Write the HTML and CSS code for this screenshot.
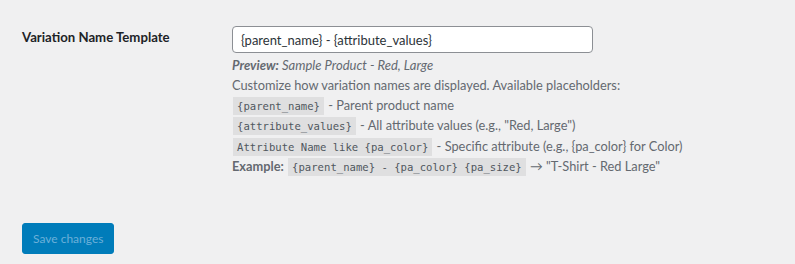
FILE: index.html
```html
<!DOCTYPE html>
<html>
<head>
    <title>Variation Name Settings</title>
    <meta charset="UTF-8">
    <link rel="stylesheet" href="styles.css">
</head>
<body>
    <div class="wrap">
        <form class="settings-form">
            <div class="settings-row">
                <label class="field-label" for="name-template">Variation Name Template</label>
                <div class="field">
                    <input type="text" id="name-template" class="text-input" value="{parent_name} - {attribute_values}">
                    <p class="preview"><strong>Preview:</strong> Sample Product - Red, Large</p>
                    <p class="description">
                        Customize how variation names are displayed. Available placeholders:<br>
                        <code>{parent_name}</code> - Parent product name<br>
                        <code>{attribute_values}</code> - All attribute values (e.g., "Red, Large")<br>
                        <code>Attribute Name like {pa_color}</code> - Specific attribute (e.g., {pa_color} for Color)<br>
                        <strong>Example:</strong> <code>{parent_name} - {pa_color} {pa_size}</code> → "T-Shirt - Red Large"
                    </p>
                </div>
            </div>

            <div class="submit-row">
                <button type="submit" class="save-btn" disabled>Save changes</button>
            </div>
        </form>
    </div>
</body>
</html>
```

FILE: styles.css
```css
body {
    font-family: Lato, "Noto Sans", sans-serif;
    margin: 0;
    background: #f0f0f1;
    color: #1d2327;
    font-size: 13px;
}

.wrap {
    padding: 26px 0 0 22px;
}

.settings-row {
    display: flex;
    align-items: flex-start;
}

.field-label {
    width: 210px;
    flex-shrink: 0;
    font-size: 13.2px;
    font-weight: 700;
    line-height: 20px;
    padding-top: 1px;
    color: #1d2327;
}

.field {
    flex: 1;
}

.text-input {
    display: block;
    box-sizing: border-box;
    width: 361px;
    height: 27px;
    margin: 0;
    padding: 0 8px;
    border: 1px solid #8c8f94;
    border-radius: 4px;
    background: #ffffff;
    color: #2c3338;
    font-family: inherit;
    font-size: 13px;
}

.preview {
    margin: 2px 0 0;
    font-style: italic;
    color: #646970;
    line-height: 20px;
}

.preview strong {
    font-weight: 700;
}

.description {
    margin: 0;
    font-size: 12.8px;
    color: #646970;
    line-height: 20.2px;
}

.description strong {
    font-weight: 700;
}

code {
    display: inline-block;
    font-family: "DejaVu Sans Mono", monospace;
    font-size: 10.6px;
    line-height: 13px;
    background: rgba(0, 0, 0, 0.07);
    padding: 3px 4px 2px;
    margin: 0 1px;
    color: #50575e;
}

.submit-row {
    margin-top: 47px;
}

.save-btn {
    display: block;
    height: 31px;
    padding: 0 10px;
    border: 1px solid #007cba;
    border-radius: 3px;
    background: #007cba;
    color: #6bb0d9;
    font-family: inherit;
    font-size: 12px;
    cursor: default;
}
```
